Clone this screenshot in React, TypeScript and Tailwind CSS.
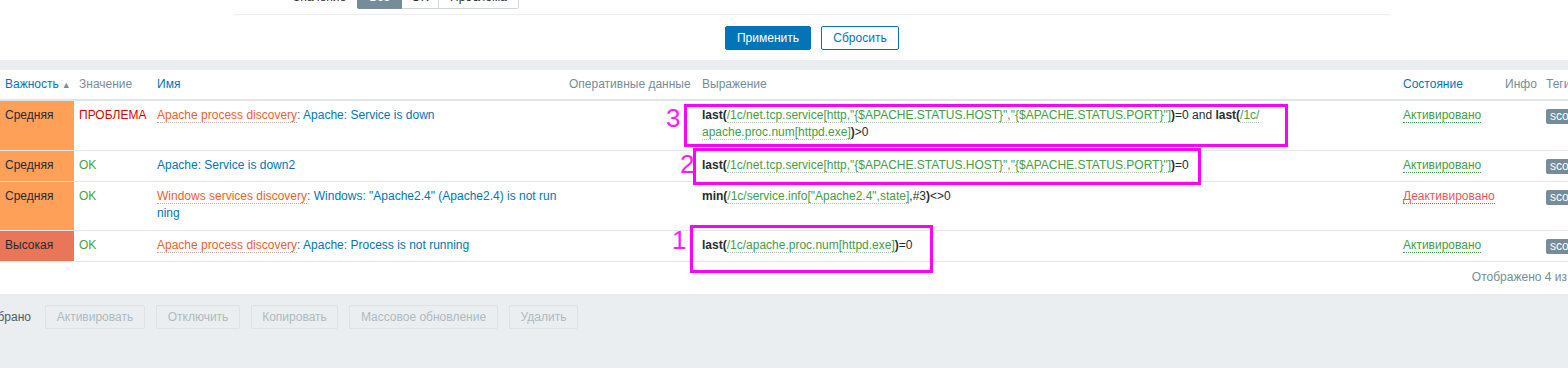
import React from "react"

type Row = {
  severity: string
  sevColor: string
  value: "ok" | "problem"
  name: React.ReactNode
  expr: React.ReactNode
  state: "on" | "off"
  height: string
}

const Key = ({ children }: { children: React.ReactNode }) => (
  <span className="text-[#429e47] border-b border-dotted border-[#9fc3a1]">{children}</span>
)

const Fn = ({ children }: { children: React.ReactNode }) => (
  <span className="font-bold text-[#1f2c33]">{children}</span>
)

const Disc = ({ children }: { children: React.ReactNode }) => (
  <span className="text-[#ef5f2c] border-b border-dotted border-[#c9a89a]">{children}</span>
)

const rows: Row[] = [
  {
    severity: "Средняя",
    sevColor: "bg-[#ffa059]",
    value: "problem",
    name: (
      <span className="whitespace-nowrap">
        <Disc>Apache process discovery</Disc>
        <span className="text-[#0275b8]">: Apache: Service is down</span>
      </span>
    ),
    expr: (
      <div className="whitespace-nowrap">
        <div>
          <Fn>last(</Fn>
          <Key>/1c/net.tcp.service[http,"{"{"}$APACHE.STATUS.HOST{"}"}","{"{"}$APACHE.STATUS.PORT{"}"}"]</Key>
          <Fn>)</Fn>=0 and <Fn>last(</Fn>
          <Key>/1c/</Key>
        </div>
        <div>
          <Key>apache.proc.num[httpd.exe]</Key>
          <Fn>)</Fn>&gt;0
        </div>
      </div>
    ),
    state: "on",
    height: "h-[50px]",
  },
  {
    severity: "Средняя",
    sevColor: "bg-[#ffa059]",
    value: "ok",
    name: <span className="text-[#0275b8] whitespace-nowrap">Apache: Service is down2</span>,
    expr: (
      <div className="whitespace-nowrap">
        <Fn>last(</Fn>
        <Key>/1c/net.tcp.service[http,"{"{"}$APACHE.STATUS.HOST{"}"}","{"{"}$APACHE.STATUS.PORT{"}"}"]</Key>
        <Fn>)</Fn>=0
      </div>
    ),
    state: "on",
    height: "h-[31px]",
  },
  {
    severity: "Средняя",
    sevColor: "bg-[#ffa059]",
    value: "ok",
    name: (
      <div className="whitespace-nowrap">
        <div>
          <Disc>Windows services discovery</Disc>
          <span className="text-[#0275b8]">: Windows: "Apache2.4" (Apache2.4) is not run</span>
        </div>
        <div className="text-[#0275b8]">ning</div>
      </div>
    ),
    expr: (
      <div className="whitespace-nowrap">
        <Fn>min(</Fn>
        <Key>/1c/service.info["Apache2.4",state]</Key>,#3<Fn>)</Fn>&lt;&gt;0
      </div>
    ),
    state: "off",
    height: "h-[49px]",
  },
  {
    severity: "Высокая",
    sevColor: "bg-[#e97659]",
    value: "ok",
    name: (
      <span className="whitespace-nowrap">
        <Disc>Apache process discovery</Disc>
        <span className="text-[#0275b8]">: Apache: Process is not running</span>
      </span>
    ),
    expr: (
      <div className="whitespace-nowrap">
        <Fn>last(</Fn>
        <Key>/1c/apache.proc.num[httpd.exe]</Key>
        <Fn>)</Fn>=0
      </div>
    ),
    state: "on",
    height: "h-[31px]",
  },
]

const cols = "grid grid-cols-[74px_78px_412px_133px_701px_102px_41px_41px]"

export default function App() {
  return (
    <div className="w-[1568px] h-[368px] overflow-hidden bg-[#ebeef0] font-['Liberation_Sans',Arial,sans-serif] text-[12px] text-[#1f2c33]">
      {/* filter */}
      <div className="h-[60px] bg-white flex flex-col">
        <div className="flex items-center h-[24px] mt-[-15px]">
          <span className="ml-[293px] w-[53px] text-[#1f2c33]">Значение</span>
          <div className="ml-[11px] flex h-[24px]">
            <div className="w-[45px] flex items-center justify-center bg-[#768d99] border border-[#768d99] text-white rounded-l-[2px]">Все</div>
            <div className="w-[37px] flex items-center justify-center border-y border-r border-[#cfd6da] text-[#1f2c33]">OK</div>
            <div className="w-[80px] flex items-center justify-center border-y border-r border-[#cfd6da] text-[#1f2c33] rounded-r-[2px]">Проблема</div>
          </div>
        </div>
        <div className="ml-[234px] w-[1156px] mt-[5px] border-b border-[#ebeef0]" />
        <div className="flex gap-[10px] pl-[725px] mt-[11px]">
          <button className="w-[86px] h-[24px] bg-[#0275b8] border border-[#0275b8] rounded-[2px] text-white">Применить</button>
          <button className="w-[78px] h-[24px] bg-white border border-[#0275b8] rounded-[2px] text-[#0275b8]">Сбросить</button>
        </div>
      </div>

      <div className="h-[10px]" />

      {/* table */}
      <div className="relative w-[1582px] bg-white">
        <div className={`${cols} h-[31px] border-b-2 border-[#dfe4e7] items-center leading-[17px]`}>
          <div className="pl-[5px] text-[#0275b8] whitespace-nowrap">
            Важность<span className="text-[9px] text-[#768d99] ml-[3px]">▲</span>
          </div>
          <div className="pl-[5px] text-[#768d99]">Значение</div>
          <div className="pl-[5px] text-[#0275b8]">Имя</div>
          <div className="pl-[5px] text-[#768d99] whitespace-nowrap">Оперативные данные</div>
          <div className="pl-[5px] text-[#768d99]">Выражение</div>
          <div className="pl-[5px] text-[#0275b8]">Состояние</div>
          <div className="pl-[5px] text-[#768d99]">Инфо</div>
          <div className="pl-[5px] text-[#768d99]">Теги</div>
        </div>

        {rows.map((r, i) => (
          <div key={i} className={`${cols} ${r.height} border-b border-[#e3e7ea] leading-[17px]`}>
            <div className={`${r.sevColor} pl-[5px] pt-[6px] text-[#1f2c33]`}>{r.severity}</div>
            <div className="pl-[5px] pt-[6px]">
              {r.value === "problem" ? (
                <span className="text-[#dc0000]">ПРОБЛЕМА</span>
              ) : (
                <span className="text-[#4ba13a]">OK</span>
              )}
            </div>
            <div className="pl-[5px] pt-[6px]">{r.name}</div>
            <div className="pl-[5px] pt-[6px]" />
            <div className="pl-[5px] pt-[6px]">{r.expr}</div>
            <div className="pl-[5px] pt-[6px] whitespace-nowrap">
              {r.state === "on" ? (
                <span className="text-[#429e47] border-b border-dotted border-[#429e47]">Активировано</span>
              ) : (
                <span className="text-[#e45959] border-b border-dotted border-[#e45959]">Деактивировано</span>
              )}
            </div>
            <div className="pl-[5px] pt-[6px]" />
            <div className="pl-[5px] pt-[7px] whitespace-nowrap">
              <span className="inline-block h-[15px] leading-[15px] px-[4px] rounded-[2px] bg-[#768d99] text-white">scope: availability</span>
            </div>
          </div>
        ))}

        <div className="h-[32px] pt-[7px] pr-[5px] text-right leading-[17px] text-[#768d99]">Отображено 4 из 4</div>

        {/* annotations */}
        <div className="absolute left-[684px] top-[34px] w-[604px] h-[43px] border-[3px] border-[#ff00ff]" />
        <div className="absolute left-[666px] top-[35px] text-[26px] leading-none text-[#ff1aff]">3</div>
        <div className="absolute left-[693px] top-[78px] w-[508px] h-[37px] border-[3px] border-[#ff00ff]" />
        <div className="absolute left-[680px] top-[81px] text-[26px] leading-none text-[#ff1aff]">2</div>
        <div className="absolute left-[690px] top-[155px] w-[243px] h-[48px] border-[3px] border-[#ff00ff]" />
        <div className="absolute left-[672px] top-[157px] text-[26px] leading-none text-[#ff1aff]">1</div>
      </div>

      {/* actions */}
      <div className="flex items-center mt-[11px]">
        <span className="ml-[-29px] w-[60px] text-right text-[#4f5b61] whitespace-nowrap">0 выбрано</span>
        <div className="ml-[14px] flex gap-[11px]">
          {[
            ["Активировать", "w-[100px]"],
            ["Отключить", "w-[84px]"],
            ["Копировать", "w-[87px]"],
            ["Массовое обновление", "w-[149px]"],
            ["Удалить", "w-[69px]"],
          ].map(([label, w]) => (
            <button key={label} className={`${w} h-[24px] border border-[#dde2e5] rounded-[2px] text-[#acbbc2]`}>
              {label}
            </button>
          ))}
        </div>
      </div>
    </div>
  )
}
